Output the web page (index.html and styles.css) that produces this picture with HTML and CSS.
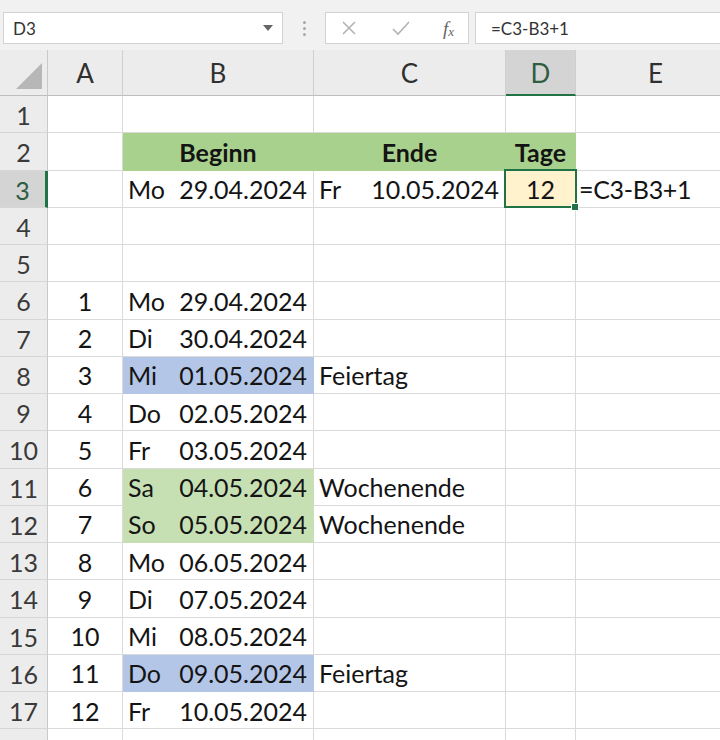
FILE: index.html
```html
<!DOCTYPE html>
<html lang="de">
<head>
<meta charset="utf-8">
<title>Excel – Tage</title>
<link rel="stylesheet" href="styles.css">
</head>
<body>
<div class="app">
  <div class="fbar">
    <div class="namebox"><span>D3</span><span class="dd"></span></div>
    <div class="dots"><i></i><i></i><i></i></div>
    <div class="btns">
      <svg class="ico" width="20" height="20" viewBox="0 0 20 20"><path d="M4 4 L16 16 M16 4 L4 16" stroke="#b3b3b3" stroke-width="1.6" fill="none"/></svg>
      <svg class="ico" width="22" height="20" viewBox="0 0 22 20"><path d="M3 11 L8 16 L19 4" stroke="#b3b3b3" stroke-width="1.6" fill="none"/></svg>
      <span class="fx">f<sub>x</sub></span>
    </div>
    <div class="finput">=C3-B3+1</div>
  </div>

  <div class="sheet">
    <div class="corner"><span class="tri"></span></div>
    <div class="ch">A</div>
    <div class="ch">B</div>
    <div class="ch">C</div>
    <div class="ch chsel">D</div>
    <div class="ch">E</div>

    <div class="rh">1</div><div class="c"></div><div class="c"></div><div class="c"></div><div class="c"></div><div class="c"></div>

    <div class="rh">2</div><div class="c"></div><div class="c hd">Beginn</div><div class="c hd">Ende</div><div class="c hd">Tage</div><div class="c"></div>

    <div class="rh rhsel">3</div><div class="c"></div>
    <div class="c dt"><span>Mo</span><span>29.04.2024</span></div>
    <div class="c dt"><span>Fr</span><span>10.05.2024</span></div>
    <div class="c sel">12</div>
    <div class="c tx tx3">=C3-B3+1</div>

    <div class="rh">4</div><div class="c"></div><div class="c"></div><div class="c"></div><div class="c"></div><div class="c"></div>
    <div class="rh">5</div><div class="c"></div><div class="c"></div><div class="c"></div><div class="c"></div><div class="c"></div>

    <div class="rh">6</div><div class="c num">1</div><div class="c dt"><span>Mo</span><span>29.04.2024</span></div><div class="c"></div><div class="c"></div><div class="c"></div>
    <div class="rh">7</div><div class="c num">2</div><div class="c dt"><span>Di</span><span>30.04.2024</span></div><div class="c"></div><div class="c"></div><div class="c"></div>
    <div class="rh">8</div><div class="c num">3</div><div class="c dt blue"><span>Mi</span><span>01.05.2024</span></div><div class="c tx">Feiertag</div><div class="c"></div><div class="c"></div>
    <div class="rh">9</div><div class="c num">4</div><div class="c dt"><span>Do</span><span>02.05.2024</span></div><div class="c"></div><div class="c"></div><div class="c"></div>
    <div class="rh">10</div><div class="c num">5</div><div class="c dt"><span>Fr</span><span>03.05.2024</span></div><div class="c"></div><div class="c"></div><div class="c"></div>
    <div class="rh">11</div><div class="c num">6</div><div class="c dt green"><span>Sa</span><span>04.05.2024</span></div><div class="c tx">Wochenende</div><div class="c"></div><div class="c"></div>
    <div class="rh">12</div><div class="c num">7</div><div class="c dt green"><span>So</span><span>05.05.2024</span></div><div class="c tx">Wochenende</div><div class="c"></div><div class="c"></div>
    <div class="rh">13</div><div class="c num">8</div><div class="c dt"><span>Mo</span><span>06.05.2024</span></div><div class="c"></div><div class="c"></div><div class="c"></div>
    <div class="rh">14</div><div class="c num">9</div><div class="c dt"><span>Di</span><span>07.05.2024</span></div><div class="c"></div><div class="c"></div><div class="c"></div>
    <div class="rh">15</div><div class="c num">10</div><div class="c dt"><span>Mi</span><span>08.05.2024</span></div><div class="c"></div><div class="c"></div><div class="c"></div>
    <div class="rh">16</div><div class="c num">11</div><div class="c dt blue"><span>Do</span><span>09.05.2024</span></div><div class="c tx">Feiertag</div><div class="c"></div><div class="c"></div>
    <div class="rh">17</div><div class="c num">12</div><div class="c dt"><span>Fr</span><span>10.05.2024</span></div><div class="c"></div><div class="c"></div><div class="c"></div>
    <div class="rh"></div><div class="c"></div><div class="c"></div><div class="c"></div><div class="c"></div><div class="c"></div>
  </div>
</div>
</body>
</html>
```

FILE: styles.css
```css
* { box-sizing: border-box; }
html, body { margin: 0; padding: 0; background: #fff; }
body { font-family: Lato, "Open Sans", sans-serif; color: #141414; }

.app { width: 720px; height: 740px; overflow: hidden; }

/* formula bar */
.fbar {
  height: 50px;
  background: #f1f1f1;
  display: flex;
  align-items: flex-start;
  padding-top: 12px;
  padding-left: 3px;
}
.namebox {
  width: 280px; height: 32px;
  background: #fff;
  border: 1px solid #d2d2d2;
  display: flex; align-items: center; justify-content: space-between;
  padding: 0 9px 0 9px;
  font-size: 17px; color: #333;
}
.dd {
  width: 0; height: 0;
  border-left: 5px solid transparent;
  border-right: 5px solid transparent;
  border-top: 6px solid #666;
}
.dots {
  width: 42px; height: 32px;
  display: flex; flex-direction: column; align-items: center; justify-content: center; gap: 3px;
}
.dots i { width: 3px; height: 3px; border-radius: 50%; background: #a8a8a8; display: block; }
.btns {
  width: 144px; height: 32px;
  background: #fff;
  border: 1px solid #d2d2d2;
  display: flex; align-items: center; justify-content: space-between;
  padding: 0 14px 0 13px;
}
.ico { display: block; }
.fx {
  font-family: "Liberation Serif", "DejaVu Serif", serif;
  font-style: italic; font-size: 19px; color: #666;
  line-height: 1;
}
.fx sub { font-size: 13px; vertical-align: -1px; }
.finput {
  margin-left: 6px;
  flex: 1; height: 32px;
  background: #fff;
  border: 1px solid #d2d2d2;
  border-right: none;
  display: flex; align-items: center;
  padding-left: 15px;
  font-size: 17px; color: #333;
}

/* sheet grid */
.sheet {
  display: grid;
  grid-template-columns: 48px 75px 191px 192px 70px 160px;
  grid-template-rows: 46px;
  grid-auto-rows: 37.25px;
  font-size: 25px;
}
.corner {
  background: #ececec;
  border-right: 1px solid #c9c9c9;
  border-bottom: 1px solid #bdbdbd;
  position: relative;
}
.tri {
  position: absolute; right: 5px; bottom: 6px;
  width: 0; height: 0;
  border-left: 26px solid transparent;
  border-bottom: 26px solid #b7b7b7;
}
.ch {
  background: #ececec;
  border-right: 1px solid #cfcfcf;
  border-bottom: 1px solid #bdbdbd;
  display: flex; align-items: center; justify-content: center;
  color: #303030; font-size: 26px;
}
.chsel {
  background: #d4d4d4;
  color: #2e5d44;
  border-bottom: 2px solid #217346;
  padding-top: 1px;
}
.rh {
  background: #ececec;
  border-right: 1px solid #c9c9c9;
  border-bottom: 1px solid #d6d6d6;
  display: flex; align-items: center; justify-content: center;
  color: #3a3a3a; font-size: 25px;
  padding-top: 2px;
}
.rhsel {
  background: #d4d4d4;
  color: #2e5d44;
  border-right: 3px solid #217346;
}
.c {
  border-right: 1px solid #dadada;
  border-bottom: 1px solid #dadada;
  display: flex; align-items: center;
  white-space: nowrap; overflow: visible;
  line-height: 1;
  padding-top: 2px;
}
.num { justify-content: center; }
.dt { justify-content: space-between; padding: 2px 6px 0 5px; }
.tx { padding-left: 5px; }
.tx3 { padding-left: 3px; letter-spacing: -0.3px; }
.hd {
  background: #a9d18e;
  border-color: #a9d18e;
  font-weight: 700;
  justify-content: center;
}
.blue { background: #b4c6e7; border-color: #b4c6e7; }
.green { background: #c6e0b4; border-color: #c6e0b4; }
.sel {
  background: #fff2cc;
  justify-content: center;
  position: relative;
}
.sel::after {
  content: "";
  position: absolute;
  left: -2px; top: -2px; right: -2px; bottom: -1px;
  border: 2px solid #217346;
}
.sel::before {
  content: "";
  position: absolute;
  right: -4px; bottom: -4px;
  width: 6px; height: 6px;
  background: #217346;
  border: 1px solid #fff;
  z-index: 2;
}
```
